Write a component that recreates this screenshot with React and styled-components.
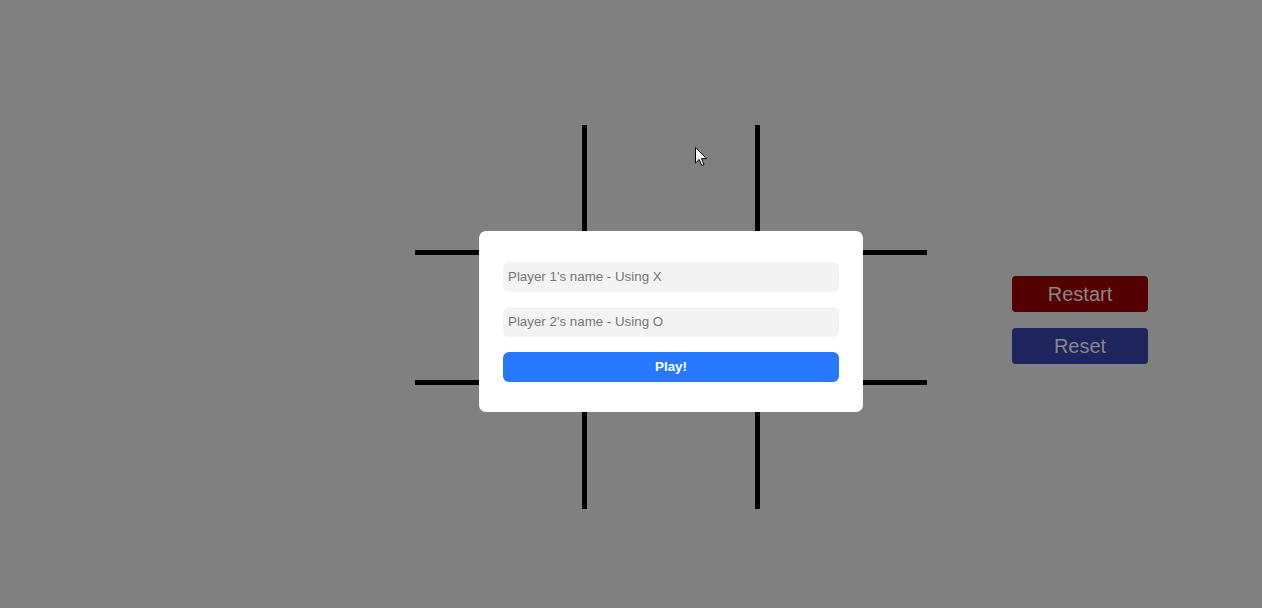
import React from 'react';
import styled, { createGlobalStyle } from 'styled-components';

const GlobalStyle = createGlobalStyle`
  html, body {
    margin: 0;
    padding: 0;
    background: #808080;
    font-family: "Liberation Sans", Arial, sans-serif;
  }
`;

const Page = styled.div`
  position: relative;
  height: 608px;
  box-sizing: border-box;
  padding: 26px 0 0 415px;
  display: flex;
  align-items: center;
  gap: 85px;
`;

const BoardWrap = styled.div`
  position: relative;
`;

const Board = styled.div`
  display: grid;
  grid-template-columns: 167px 168px 167px;
  grid-template-rows: 125px 125px 124px;
  gap: 5px;
  background: #000;
`;

const Cell = styled.div`
  background: #808080;
`;

const Modal = styled.form`
  position: absolute;
  top: 106px;
  left: 64px;
  width: 384px;
  box-sizing: border-box;
  padding: 31px 24px 30px;
  background: #fff;
  border-radius: 7px;
  display: flex;
  flex-direction: column;
  gap: 15px;
`;

const NameInput = styled.input`
  height: 30px;
  box-sizing: border-box;
  border: none;
  outline: none;
  border-radius: 6px;
  background: #f3f3f3;
  padding: 0 5px 2px;
  font-family: "Liberation Sans", Arial, sans-serif;
  font-size: 13.333px;
  color: #333;

  &::placeholder {
    color: #757575;
  }
`;

const PlayButton = styled.button`
  height: 30px;
  border: none;
  border-radius: 6px;
  background: #2979ff;
  color: #fff;
  padding: 0 0 2px;
  font-family: "Liberation Sans", Arial, sans-serif;
  font-size: 13.333px;
  font-weight: bold;
  cursor: pointer;
`;

const Side = styled.div`
  display: flex;
  flex-direction: column;
  gap: 16px;
  margin-top: 6px;
`;

const SideButton = styled.button`
  width: 136px;
  height: 36px;
  border: none;
  border-radius: 4px;
  background: ${(p) => p.$bg};
  color: #898989;
  font-family: "Liberation Sans", Arial, sans-serif;
  font-size: 20px;
  padding: 0;
`;

const Pointer = styled.svg`
  position: absolute;
  left: 695px;
  top: 147px;
`;

export default function App() {
  return (
    <>
      <GlobalStyle />
      <Page>
        <BoardWrap>
          <Board>
            {Array.from({ length: 9 }).map((_, i) => (
              <Cell key={i} />
            ))}
          </Board>
          <Modal onSubmit={(e) => e.preventDefault()}>
            <NameInput placeholder="Player 1's name - Using X" />
            <NameInput placeholder="Player 2's name - Using O" />
            <PlayButton type="submit">Play!</PlayButton>
          </Modal>
        </BoardWrap>
        <Side>
          <SideButton $bg="#550000">Restart</SideButton>
          <SideButton $bg="#1e245c">Reset</SideButton>
        </Side>
        <Pointer width="13" height="20" viewBox="0 0 13 20">
          <path
            d="M0.5 0.5 L0.5 16 L4.2 12.4 L6.8 18.5 L9 17.6 L6.5 11.6 L11.5 11.6 Z"
            fill="#fff"
            stroke="#000"
            strokeWidth="1"
            strokeLinejoin="miter"
          />
        </Pointer>
      </Page>
    </>
  );
}
